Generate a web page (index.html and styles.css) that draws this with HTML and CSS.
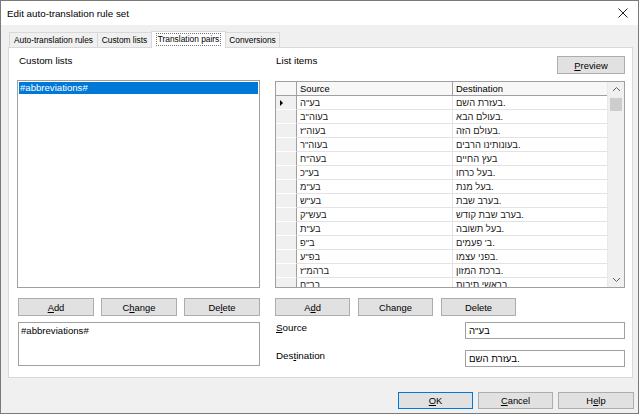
FILE: index.html
```html
<!DOCTYPE html>
<html>
<head>
<meta charset="utf-8">
<link rel="stylesheet" href="styles.css">
</head>
<body>
<div class="window">
  <div class="titlebar">
    <span class="title">Edit auto-translation rule set</span>
    <svg class="close" width="10" height="10" viewBox="0 0 10 10"><path d="M0.5 0.5 L9.5 9.5 M9.5 0.5 L0.5 9.5" stroke="#222" stroke-width="1"/></svg>
  </div>
  <div class="client">
    <div class="tabs">
      <div class="tab t1">Auto-translation rules</div>
      <div class="tab t2">Custom lists</div>
      <div class="tab active"><span class="focus">Translation pairs</span></div>
      <div class="tab t4">Conversions</div>
    </div>
    <div class="panel">
      <div class="col left">
        <div class="head"><span class="label">Custom lists</span></div>
        <div class="listbox">
          <div class="item selected">#abbreviations#</div>
        </div>
        <div class="btnrow">
          <button class="btn"><u>A</u>dd</button>
          <button class="btn">C<u>h</u>ange</button>
          <button class="btn">De<u>l</u>ete</button>
        </div>
        <div class="memo">#abbreviations#</div>
      </div>
      <div class="col right">
        <div class="head">
          <span class="label">List items</span>
          <button class="btn preview"><u>P</u>review</button>
        </div>
        <div class="grid">
          <div class="table">
            <div class="row header">
              <div class="ind"></div>
              <div class="cell src">Source</div>
              <div class="cell dst">Destination</div>
            </div>
            <div class="row"><div class="ind"><span class="arrow"></span></div><div class="cell src">בע"ה</div><div class="cell dst">בעזרת השם.</div></div>
            <div class="row"><div class="ind"></div><div class="cell src">בעוה"ב</div><div class="cell dst">בעולם הבא.</div></div>
            <div class="row"><div class="ind"></div><div class="cell src">בעוה"ז</div><div class="cell dst">בעולם הזה.</div></div>
            <div class="row"><div class="ind"></div><div class="cell src">בעוה"ר</div><div class="cell dst">בעונותינו הרבים.</div></div>
            <div class="row"><div class="ind"></div><div class="cell src">בעה"ח</div><div class="cell dst">בעץ החיים</div></div>
            <div class="row"><div class="ind"></div><div class="cell src">בע"כ</div><div class="cell dst">בעל כרחו.</div></div>
            <div class="row"><div class="ind"></div><div class="cell src">בע"מ</div><div class="cell dst">בעל מנת.</div></div>
            <div class="row"><div class="ind"></div><div class="cell src">בע"ש</div><div class="cell dst">בערב שבת.</div></div>
            <div class="row"><div class="ind"></div><div class="cell src">בעש"ק</div><div class="cell dst">בערב שבת קודש.</div></div>
            <div class="row"><div class="ind"></div><div class="cell src">בע"ת</div><div class="cell dst">בעל תשובה.</div></div>
            <div class="row"><div class="ind"></div><div class="cell src">ב"פ</div><div class="cell dst">ב' פעמים.</div></div>
            <div class="row"><div class="ind"></div><div class="cell src">בפ"ע</div><div class="cell dst">בפני עצמו.</div></div>
            <div class="row"><div class="ind"></div><div class="cell src">ברהמ"ז</div><div class="cell dst">ברכת המזון.</div></div>
            <div class="row"><div class="ind"></div><div class="cell src">בר"ח</div><div class="cell dst">בראשי תיבות.</div></div>
          </div>
          <div class="vscroll">
            <svg class="sarrow" width="17" height="15" viewBox="0 0 17 15"><path d="M5 9 L8.5 5.5 L12 9" fill="none" stroke="#606060" stroke-width="1"/></svg>
            <div class="thumb"></div>
            <div class="strack"></div>
            <svg class="sarrow" width="17" height="15" viewBox="0 0 17 15"><path d="M5 6 L8.5 9.5 L12 6" fill="none" stroke="#606060" stroke-width="1"/></svg>
          </div>
        </div>
        <div class="btnrow">
          <button class="btn">A<u>d</u>d</button>
          <button class="btn">Change</button>
          <button class="btn">Delete</button>
        </div>
        <div class="field">
          <span class="label"><u>S</u>ource</span>
          <div class="input">בע"ה</div>
        </div>
        <div class="field">
          <span class="label">Des<u>t</u>ination</span>
          <div class="input">בעזרת השם.</div>
        </div>
      </div>
    </div>
    <div class="footer">
      <button class="btn default"><u>O</u>K</button>
      <button class="btn"><u>C</u>ancel</button>
      <button class="btn">H<u>e</u>lp</button>
    </div>
  </div>
</div>
</body>
</html>
```
FILE: styles.css
```css
* { box-sizing: border-box; }
html, body { margin: 0; padding: 0; background: #ffffff; }
body { font-family: "Liberation Sans", Arial, "DejaVu Sans", sans-serif; color: #000; }

.window {
  width: 639px;
  height: 414px;
  border: 1px solid #7a7a7a;
  display: flex;
  flex-direction: column;
  background: #f0f0f0;
  overflow: hidden;
}

.titlebar {
  height: 24px;
  background: #ffffff;
  display: flex;
  align-items: center;
  justify-content: space-between;
  padding: 0 10px 0 6px;
  flex: none;
}
.title { font-size: 9.8px; color: #000; padding-top: 1px; }
.close { display: block; }

.client {
  flex: 1;
  display: flex;
  flex-direction: column;
  padding: 6px 0 0 7px;
}

.tabs {
  display: flex;
  align-items: flex-end;
  height: 16px;
  padding-left: 1px;
  position: relative;
  z-index: 2;
}
.tab {
  height: 15px;
  border: 1px solid #d9d9d9;
  border-bottom: none;
  background: #f0f0f0;
  font-size: 8.4px;
  padding: 0;
  display: flex;
  align-items: center;
  justify-content: center;
  white-space: nowrap;
  margin-right: -1px;
  color: #000;
  flex: none;
}
.t1 { width: 89px; }
.t2 { width: 55px; }
.t4 { width: 55px; }
.tab.active {
  height: 17px;
  width: 75px;
  background: #ffffff;
  margin-bottom: -1px;
  position: relative;
  z-index: 3;
}
.focus {
  border: 1px dotted #777;
  padding: 0 1px;
  line-height: 11px;
  margin-top: -2px;
}

.panel {
  width: 625px;
  height: 331px;
  background: #ffffff;
  border: 1px solid #d9d9d9;
  display: flex;
  padding: 8px 6px 0 8px;
  gap: 15px;
  flex: none;
}

.col { display: flex; flex-direction: column; }
.col.left { width: 243px; }
.col.right { width: 350px; }

.head {
  height: 24px;
  display: flex;
  align-items: flex-start;
  justify-content: space-between;
}
.col.right .head { height: 25px; }
.label { font-size: 9.8px; color: #000; padding-left: 2px; margin-top: -1px; }
.col.right .head .label { padding-left: 1px; }

.btn {
  font-family: "Liberation Sans", Arial, sans-serif;
  font-size: 9.4px;
  color: #000;
  background: #e1e1e1;
  border: 1px solid #adadad;
  height: 18px;
  width: 76px;
  padding: 0;
  margin: 0;
  display: flex;
  align-items: center;
  justify-content: center;
}
.btn u { text-decoration: underline; text-underline-offset: 1px; }
.preview { width: 68px; height: 18px; }

.listbox {
  height: 208px;
  border: 1px solid #a0a0a0;
  padding: 1px;
  background: #fff;
}
.item {
  height: 12px;
  font-size: 9.6px;
  line-height: 12px;
  padding-left: 1px;
}
.item.selected { background: #0078d7; color: #ffffff; }

.btnrow {
  display: flex;
  gap: 7px;
  margin-top: 10px;
  padding-left: 1px;
}
.col.left .btnrow { justify-content: space-between; gap: 0; }
.col.right .btnrow { padding-left: 0; gap: 8px; }
.col.right .btnrow .btn { width: 75px; }

.memo {
  margin-top: 6px;
  margin-left: 1px;
  height: 44px;
  border: 1px solid #a0a0a0;
  font-size: 9.6px;
  padding: 2px 2px;
  background: #fff;
}

.grid {
  height: 207px;
  border: 1px solid #a0a0a0;
  display: flex;
  overflow: hidden;
  background: #fff;
}
.table { flex: 1; display: flex; flex-direction: column; overflow: hidden; }
.row {
  display: flex;
  height: 14px;
  flex: none;
  font-size: 9.4px;
}
.ind {
  width: 21px;
  flex: none;
  background: #f0f0f0;
  border-right: 1px solid #a0a0a0;
  border-bottom: 1px solid #ffffff;
  display: flex;
  align-items: center;
  padding-left: 4px;
}
.arrow {
  width: 0; height: 0;
  border-top: 3px solid transparent;
  border-bottom: 3px solid transparent;
  border-left: 3px solid #000;
}
.cell {
  border-right: 1px solid #e3e3e3;
  border-bottom: 1px solid #e3e3e3;
  line-height: 13px;
  padding-left: 3px;
  white-space: nowrap;
  overflow: hidden;
  color: #222;
}
.cell.src { width: 156px; }
.cell.dst { flex: 1; border-right: none; }
.row.header { height: 14px; }
.row.header .ind { background: #f7f7f7; border-bottom: 1px solid #a0a0a0; }
.row.header .cell {
  background: #f7f7f7;
  border-right: 1px solid #a0a0a0;
  border-bottom: 1px solid #a0a0a0;
  color: #000;
}
.row.header .cell.dst { border-right: none; }

.vscroll {
  width: 17px;
  flex: none;
  background: #f0f0f0;
  display: flex;
  flex-direction: column;
  border-left: 1px solid #e8e8e8;
}
.sarrow { display: block; flex: none; }
.thumb {
  height: 13px;
  margin: 1px 2px 0 2px;
  background: #cdcdcd;
  flex: none;
}
.strack { flex: 1; }

.field {
  display: flex;
  align-items: flex-start;
  justify-content: space-between;
  height: 17px;
  margin-top: 6px;
}
.field + .field { margin-top: 11px; }
.field .label { padding-left: 1px; margin-top: 0; line-height: 12px; }
.input {
  width: 160px;
  height: 17px;
  border: 1px solid #a0a0a0;
  background: #fff;
  font-size: 9.6px;
  line-height: 15px;
  padding-left: 3px;
  white-space: nowrap;
}

.footer {
  display: flex;
  justify-content: flex-end;
  gap: 5px;
  margin-top: 14px;
  padding-right: 4px;
}
.footer .btn { width: 75px; height: 17px; }
.footer .btn:last-child { width: 76px; }
.btn.default { border: 1px solid #0078d7; }
```
